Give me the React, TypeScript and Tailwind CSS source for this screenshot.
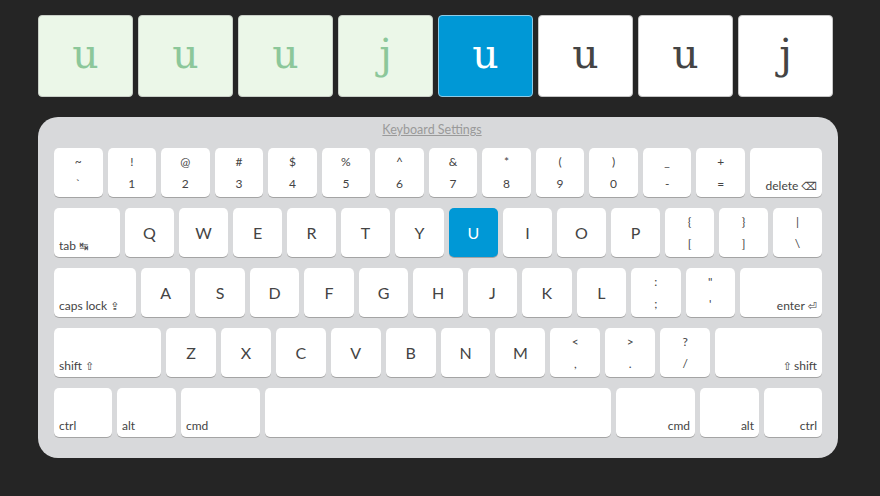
import React from "react";

type Tile = { ch: string; state: "done" | "current" | "todo" };

const tiles: Tile[] = [
  { ch: "u", state: "done" },
  { ch: "u", state: "done" },
  { ch: "u", state: "done" },
  { ch: "j", state: "done" },
  { ch: "u", state: "current" },
  { ch: "u", state: "todo" },
  { ch: "u", state: "todo" },
  { ch: "j", state: "todo" },
];

const tileClass = {
  done: "bg-[#ebf7e8] border-[#c9cfc7] text-[#8cc79a]",
  current: "bg-[#0098d6] border-[#8fcbe6] text-white",
  todo: "bg-white border-[#c6c6c6] text-[#444]",
};

const keyBase = "h-[49px] rounded-[5px] shadow-[0_1px_0_#a4a4a4] flex";
const plain = "bg-white text-[#444]";

function Pair({ top, bottom }: { top: string; bottom: string }) {
  return (
    <div className={`${keyBase} ${plain} flex-1 flex-col items-center justify-center gap-[6px] text-[12px] leading-[16px]`}>
      <span>{top}</span>
      <span>{bottom}</span>
    </div>
  );
}

function Letter({ ch, active }: { ch: string; active?: boolean }) {
  return (
    <div
      className={`${keyBase} flex-1 items-center justify-center text-[16px] ${
        active ? "bg-[#0098d6] text-white" : plain
      }`}
    >
      {ch}
    </div>
  );
}

function Mod({ label, icon, width, right }: { label: string; icon?: string; width: string; right?: boolean }) {
  return (
    <div
      className={`${keyBase} ${plain} ${width} shrink-0 items-end pb-[3px] text-[12px] leading-[16px] ${
        right ? "justify-end pr-[5px]" : "justify-start pl-[5px]"
      }`}
    >
      {right && icon === "⇧" && <span className="text-[11px] mr-[2px]">{icon}</span>}
      <span>{label}</span>
      {icon && !(right && icon === "⇧") && <span className="text-[11px] ml-[3px]">{icon}</span>}
    </div>
  );
}

export default function App() {
  const numRow: [string, string][] = [
    ["~", "`"], ["!", "1"], ["@", "2"], ["#", "3"], ["$", "4"], ["%", "5"], ["^", "6"],
    ["&", "7"], ["*", "8"], ["(", "9"], [")", "0"], ["_", "-"], ["+", "="],
  ];

  return (
    <div className="w-[880px] h-[496px] bg-[#252525] overflow-hidden" style={{ fontFamily: "Lato, 'DejaVu Sans', sans-serif" }}>
      {/* typed text */}
      <div className="flex gap-[5px] pl-[38px] pt-[15px]">
        {tiles.map((t, i) => (
          <div
            key={i}
            className={`w-[95px] h-[82px] rounded-[4px] border flex items-center justify-center text-[41px] pb-[3px] ${tileClass[t.state]}`}
            style={{ fontFamily: "'DejaVu Serif', 'Liberation Serif', serif" }}
          >
            {t.ch}
          </div>
        ))}
      </div>

      {/* keyboard */}
      <div className="ml-[38px] mt-[20px] w-[800px] h-[341px] rounded-[20px] bg-[#d8d9db] px-[16px] pt-[5px]">
        <div className="pr-[12px] text-center text-[12.5px] leading-[16px] text-[#9a9a9a] underline mb-[10px]">Keyboard Settings</div>

        <div className="flex flex-col gap-[11px]">
          <div className="flex gap-[5px]">
            {numRow.map(([a, b]) => (
              <Pair key={b} top={a} bottom={b} />
            ))}
            <Mod label="delete" icon="⌫" width="w-[72px]" right />
          </div>

          <div className="flex gap-[5px]">
            <Mod label="tab" icon="↹" width="w-[66px]" />
            {"QWERTYUIOP".split("").map((c) => (
              <Letter key={c} ch={c} active={c === "U"} />
            ))}
            <Pair top="{" bottom="[" />
            <Pair top="}" bottom="]" />
            <Pair top="|" bottom="\" />
          </div>

          <div className="flex gap-[5px]">
            <Mod label="caps lock" icon="⇪" width="w-[82px]" />
            {"ASDFGHJKL".split("").map((c) => (
              <Letter key={c} ch={c} />
            ))}
            <Pair top=":" bottom=";" />
            <Pair top={'"'} bottom="'" />
            <Mod label="enter" icon="⏎" width="w-[82px]" right />
          </div>

          <div className="flex gap-[5px]">
            <Mod label="shift" icon="⇧" width="w-[107px]" />
            {"ZXCVBNM".split("").map((c) => (
              <Letter key={c} ch={c} />
            ))}
            <Pair top="<" bottom="," />
            <Pair top=">" bottom="." />
            <Pair top="?" bottom="/" />
            <Mod label="shift" icon="⇧" width="w-[107px]" right />
          </div>

          <div className="flex gap-[5px]">
            <Mod label="ctrl" width="w-[58px]" />
            <Mod label="alt" width="w-[59px]" />
            <Mod label="cmd" width="w-[79px]" />
            <div className={`${keyBase} ${plain} flex-1`} />
            <Mod label="cmd" width="w-[79px]" right />
            <Mod label="alt" width="w-[59px]" right />
            <Mod label="ctrl" width="w-[58px]" right />
          </div>
        </div>
      </div>
    </div>
  );
}
